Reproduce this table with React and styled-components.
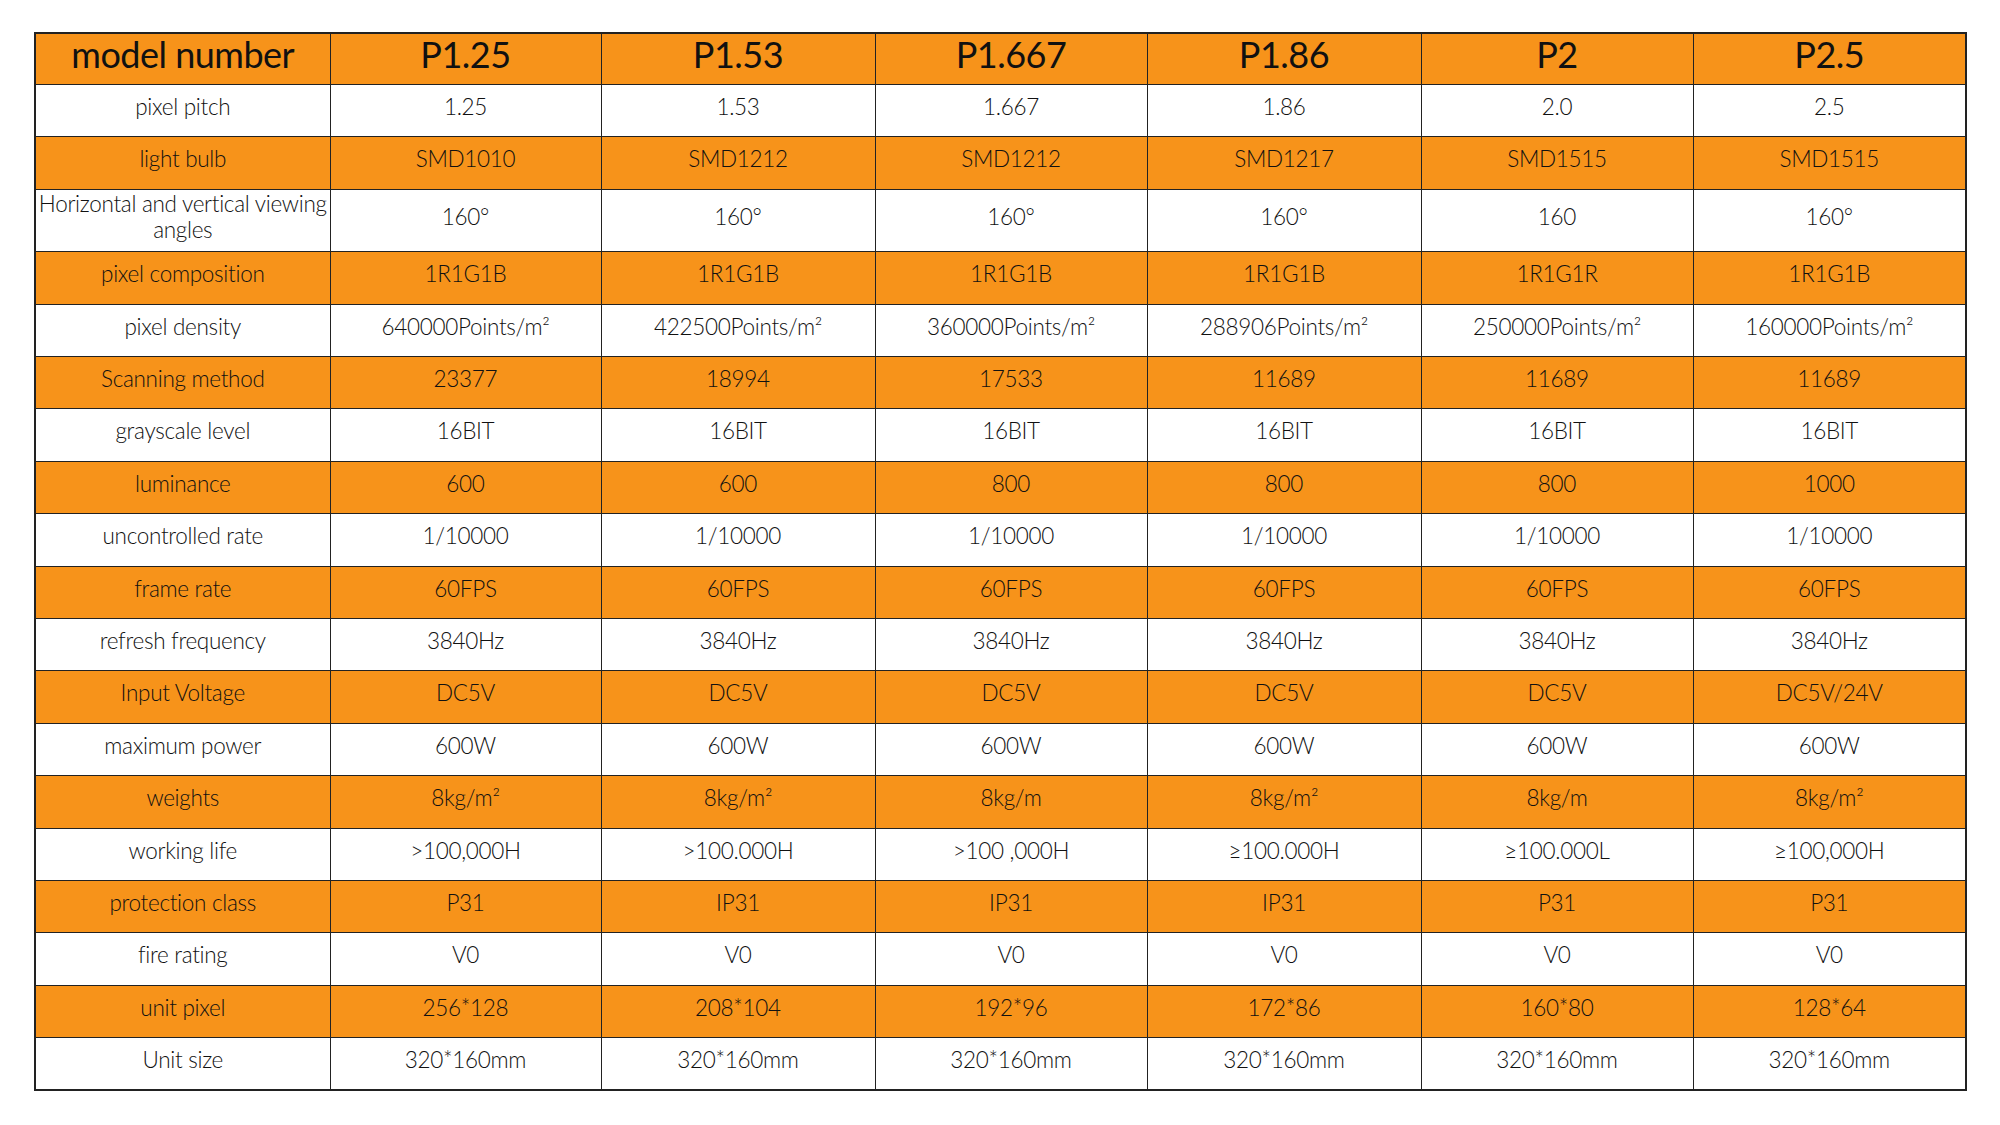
import React from 'react';
import styled, { createGlobalStyle } from 'styled-components';

const GlobalStyle = createGlobalStyle`
  html, body {
    margin: 0;
    padding: 0;
    background: #ffffff;
  }
`;

const Page = styled('div')`
  padding: 32px 0 0 34px;
  font-family: Lato, 'Open Sans', 'Noto Sans', sans-serif;
  font-weight: 300;
  color: #111;
`;

const SpecTable = styled('table')`
  border-collapse: collapse;
  table-layout: fixed;
  width: 1931px;
  border: 2px solid #222;
`;

const Col = styled('col')`
  width: ${(p) => p.$w}px;
`;

const Row = styled('tr')`
  height: ${(p) => p.$h}px;
  background: ${(p) => (p.$orange ? '#f7931a' : '#ffffff')};
`;

const HeadCell = styled('th')`
  border: 1.5px solid #222;
  font-weight: 400;
  font-size: 36px;
  line-height: 1.1;
  letter-spacing: -0.5px;
  text-align: center;
  vertical-align: middle;
  padding: 0 2px 8px;
`;

const Cell = styled('td')`
  border: 1.5px solid #222;
  font-size: 22.5px;
  letter-spacing: -0.3px;
  line-height: 1.13;
  text-align: center;
  vertical-align: middle;
  padding: 0 2px 8px;
`;

const widths = [295, 271, 274, 272, 274, 272, 273];

const header = ['model number', 'P1.25', 'P1.53', 'P1.667', 'P1.86', 'P2', 'P2.5'];

const rows = [
  ['pixel pitch', '1.25', '1.53', '1.667', '1.86', '2.0', '2.5'],
  ['light bulb', 'SMD1010', 'SMD1212', 'SMD1212', 'SMD1217', 'SMD1515', 'SMD1515'],
  ['Horizontal and vertical viewing angles', '160°', '160°', '160°', '160°', '160', '160°'],
  ['pixel composition', '1R1G1B', '1R1G1B', '1R1G1B', '1R1G1B', '1R1G1R', '1R1G1B'],
  ['pixel density', '640000Points/m²', '422500Points/m²', '360000Points/m²', '288906Points/m²', '250000Points/m²', '160000Points/m²'],
  ['Scanning method', '23377', '18994', '17533', '11689', '11689', '11689'],
  ['grayscale level', '16BIT', '16BIT', '16BIT', '16BIT', '16BIT', '16BIT'],
  ['luminance', '600', '600', '800', '800', '800', '1000'],
  ['uncontrolled rate', '1/10000', '1/10000', '1/10000', '1/10000', '1/10000', '1/10000'],
  ['frame rate', '60FPS', '60FPS', '60FPS', '60FPS', '60FPS', '60FPS'],
  ['refresh frequency', '3840Hz', '3840Hz', '3840Hz', '3840Hz', '3840Hz', '3840Hz'],
  ['Input Voltage', 'DC5V', 'DC5V', 'DC5V', 'DC5V', 'DC5V', 'DC5V/24V'],
  ['maximum power', '600W', '600W', '600W', '600W', '600W', '600W'],
  ['weights', '8kg/m²', '8kg/m²', '8kg/m', '8kg/m²', '8kg/m', '8kg/m²'],
  ['working life', '>100,000H', '>100.000H', '>100 ,000H', '≥100.000H', '≥100.000L', '≥100,000H'],
  ['protection class', 'P31', 'IP31', 'IP31', 'IP31', 'P31', 'P31'],
  ['fire rating', 'V0', 'V0', 'V0', 'V0', 'V0', 'V0'],
  ['unit pixel', '256*128', '208*104', '192*96', '172*86', '160*80', '128*64'],
  ['Unit size', '320*160mm', '320*160mm', '320*160mm', '320*160mm', '320*160mm', '320*160mm'],
];

export default function App() {
  return (
    <Page>
      <GlobalStyle />
      <SpecTable>
        <colgroup>
          {widths.map((w, i) => (
            <Col key={i} $w={w} />
          ))}
        </colgroup>
        <thead>
          <Row $orange $h={51.5}>
            {header.map((h) => (
              <HeadCell key={h}>{h}</HeadCell>
            ))}
          </Row>
        </thead>
        <tbody>
          {rows.map((r, i) => (
            <Row key={r[0]} $orange={i % 2 === 1} $h={i === 2 ? 62.5 : 52.4}>
              {r.map((c, j) => (
                <Cell key={j}>{c}</Cell>
              ))}
            </Row>
          ))}
        </tbody>
      </SpecTable>
    </Page>
  );
}
